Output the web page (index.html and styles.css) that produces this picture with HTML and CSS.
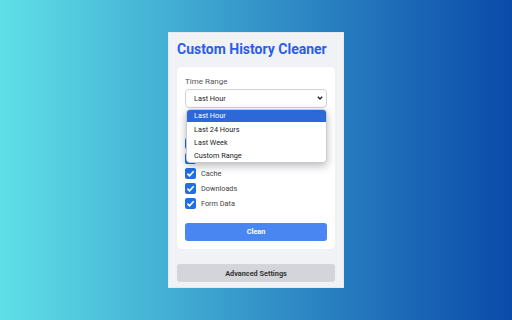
FILE: index.html
```html
<!DOCTYPE html>
<html lang="en">
<head>
<meta charset="UTF-8">
<meta name="viewport" content="width=device-width, initial-scale=1.0">
<title>Custom History Cleaner</title>
<link rel="stylesheet" href="styles.css">
</head>
<body>
<div class="popup">
  <h1 class="title">Custom History Cleaner</h1>
  <div class="card">
    <div class="field-label">Time Range</div>
    <div class="select-wrap">
      <div class="select">
        <span>Last Hour</span>
        <svg class="chevron" width="6" height="4" viewBox="0 0 6 4"><path d="M0.8 0.8L3 3 5.2 0.8" fill="none" stroke="#222" stroke-width="1.4"/></svg>
      </div>
      <ul class="dropdown">
        <li class="option selected">Last Hour</li>
        <li class="option">Last 24 Hours</li>
        <li class="option">Last Week</li>
        <li class="option">Custom Range</li>
      </ul>
    </div>
    <div class="checks">
      <!-- first two rows sit under the open menu -->
      <label class="check covered"><span class="box"><svg width="11" height="11" viewBox="0 0 11 11"><path d="M2.4 5.7l2.1 2.1 4.2-4.6" fill="none" stroke="#fff" stroke-width="1.7"/></svg></span><span class="check-text">Browsing History</span></label>
      <label class="check covered"><span class="box"><svg width="11" height="11" viewBox="0 0 11 11"><path d="M2.4 5.7l2.1 2.1 4.2-4.6" fill="none" stroke="#fff" stroke-width="1.7"/></svg></span><span class="check-text">Cookies</span></label>
      <label class="check"><span class="box"><svg width="11" height="11" viewBox="0 0 11 11"><path d="M2.4 5.7l2.1 2.1 4.2-4.6" fill="none" stroke="#fff" stroke-width="1.7"/></svg></span><span class="check-text">Cache</span></label>
      <label class="check"><span class="box"><svg width="11" height="11" viewBox="0 0 11 11"><path d="M2.4 5.7l2.1 2.1 4.2-4.6" fill="none" stroke="#fff" stroke-width="1.7"/></svg></span><span class="check-text">Downloads</span></label>
      <label class="check"><span class="box"><svg width="11" height="11" viewBox="0 0 11 11"><path d="M2.4 5.7l2.1 2.1 4.2-4.6" fill="none" stroke="#fff" stroke-width="1.7"/></svg></span><span class="check-text">Form Data</span></label>
    </div>
    <button class="btn-clean">Clean</button>
  </div>
  <button class="btn-advanced">Advanced Settings</button>
</div>
</body>
</html>
```

FILE: styles.css
```css
body {
  margin: 0;
  height: 100vh;
  display: flex;
  justify-content: center;
  align-items: center;
  font-family: Roboto, "Liberation Sans", sans-serif;
  background: linear-gradient(90deg, #5fe0e8 0%, #0a4aaa 100%);
}

.popup {
  box-sizing: border-box;
  width: 176px;
  height: 256px;
  padding: 7px 8px 5px;
  background-color: #f0f2f5;
  border: 1px solid #e4e9ee;
  display: flex;
  flex-direction: column;
}

.title {
  margin: 0 0 9px;
  font-size: 14px;
  line-height: 18px;
  font-weight: bold;
  color: #2b5de6;
  white-space: nowrap;
}

.card {
  background-color: #fff;
  border-radius: 5px;
  padding: 10px 8px 8px;
  display: flex;
  flex-direction: column;
}

.field-label {
  font-size: 8px;
  line-height: 10px;
  color: #555;
  margin-bottom: 2px;
}

.select-wrap {
  position: relative;
  margin-bottom: 30px;
}

.select {
  box-sizing: border-box;
  height: 18.5px;
  padding: 0 3px 0 8px;
  border: 1px solid #cfd3d8;
  border-radius: 4px;
  display: flex;
  align-items: center;
  justify-content: space-between;
  font-size: 7.3px;
  color: #222;
}

.chevron {
  display: block;
}

.dropdown {
  position: absolute;
  top: calc(100% + 1px);
  left: 1px;
  right: 0;
  margin: 0;
  padding: 0;
  list-style: none;
  background-color: #fff;
  border: 1px solid #c8ccd2;
  border-radius: 4px;
  box-shadow: 0 3px 8px rgba(0, 0, 0, 0.28);
  z-index: 5;
}

.option {
  height: 13px;
  line-height: 13px;
  padding-left: 7px;
  font-size: 7.3px;
  color: #222;
}

.option.selected {
  height: 12px;
  line-height: 12px;
  margin-bottom: 1px;
  background-color: #2d68d8;
  color: #fff;
  border-radius: 3px 3px 0 0;
}

.checks {
  display: flex;
  flex-direction: column;
  gap: 4px;
}

.check {
  display: flex;
  align-items: center;
  height: 11px;
  font-size: 7.3px;
  color: #444;
}

.check.covered .check-text {
  visibility: hidden;
}

.box {
  width: 11px;
  height: 11px;
  margin-right: 5px;
  background-color: #1f6fe5;
  border-radius: 2px;
}

.box svg {
  display: block;
}

.btn-clean {
  margin-top: 14px;
  height: 18.5px;
  border: none;
  border-radius: 3px;
  background-color: #4a86f2;
  color: #fff;
  font-family: inherit;
  font-size: 7.3px;
  font-weight: bold;
  padding: 0;
}

.btn-advanced {
  margin-top: 15px;
  height: 18.5px;
  border: none;
  border-radius: 3px;
  background-color: #d3d5db;
  color: #333;
  font-family: inherit;
  font-size: 7.3px;
  font-weight: bold;
  padding: 0;
}
```
